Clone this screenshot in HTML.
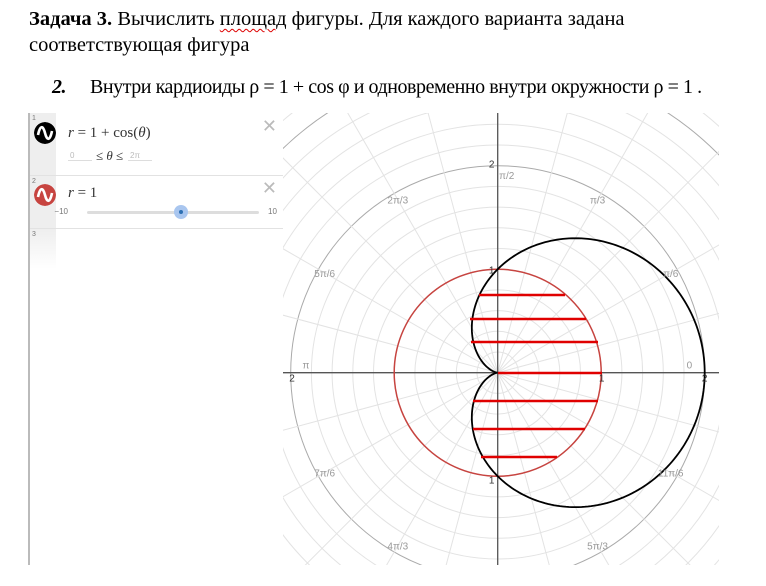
<!DOCTYPE html>
<html><head><meta charset="utf-8"><style>
html,body{margin:0;width:766px;height:586px;overflow:hidden}
body{background:#fff;position:relative;font-family:"Liberation Serif",serif;}
.t{position:absolute;left:29px;font-size:20.5px;color:#000;white-space:nowrap;line-height:24px}
.u{text-decoration:underline wavy #d00;text-decoration-thickness:1px;text-underline-offset:3px}
#panel{position:absolute;left:28px;top:113px;width:255px;height:452px;border-left:2px solid #bbb;background:#fff;font-family:"Liberation Sans",sans-serif;box-sizing:border-box}
.row{position:absolute;left:0;width:253px;border-bottom:1px solid #e2e2e2}
.strip{position:absolute;left:0;top:0;width:26px;height:100%;background:#eee}
.num{position:absolute;left:2px;top:2px;font-size:7px;color:#777}
.ic{position:absolute;left:4px;width:22px;height:22px;border-radius:50%}
.x{position:absolute;right:6px;font-size:18px;color:#bbb;font-family:"DejaVu Sans",sans-serif}
.m{position:absolute;font-family:"Liberation Serif",serif;font-size:15px;color:#333}
</style></head><body>
<div class="t" style="top:7px"><b>Задача 3.</b> Вычислить <span class="u">площад</span> фигуры. Для каждого варианта задана</div>
<div class="t" style="top:33px">соответствующая фигура</div>
<div class="t" style="top:75px;left:52px;font-size:20px;letter-spacing:-0.45px"><b><i>2.</i></b><span style="position:absolute;left:38px">Внутри кардиоиды ρ = 1 + cos φ  и одновременно внутри окружности ρ = 1 .</span></div>

<svg id="g" style="position:absolute;left:283px;top:113px" width="436" height="452"></svg>

<div id="panel">
 <div class="row" style="top:0;height:62px"><div class="strip"></div><div class="num">1</div>
  <svg class="ic" style="top:9px" viewBox="0 0 22 22"><circle cx="11" cy="11" r="11" fill="#000"/><path d="M4 13 C6 3,9 3,11 11 C13 19,16 19,18 9" stroke="#fff" stroke-width="2.6" fill="none"/></svg>
  <div class="x" style="top:3px">✕</div>
  <div class="m" style="left:38px;top:12px"><i>r</i> = 1 + cos(<i>θ</i>)</div>
  <div style="position:absolute;left:38px;top:38px;width:22px;border-bottom:1px solid #ddd;font-size:8px;color:#bbb;padding-left:2px">0</div>
  <div class="m" style="left:66px;top:35px;font-size:13px">≤ <i>θ</i> ≤</div>
  <div style="position:absolute;left:98px;top:38px;width:22px;border-bottom:1px solid #ddd;font-size:8px;color:#bbb;padding-left:2px">2π</div>
 </div>
 <div class="row" style="top:63px;height:52px"><div class="strip"></div><div class="num">2</div>
  <svg class="ic" style="top:8px" viewBox="0 0 22 22"><circle cx="11" cy="11" r="11" fill="#c74440"/><path d="M4 13 C6 3,9 3,11 11 C13 19,16 19,18 9" stroke="#fff" stroke-width="2.6" fill="none"/></svg>
  <div class="x" style="top:2px">✕</div>
  <div class="m" style="left:38px;top:9px"><i>r</i> = 1</div>
  <div style="position:absolute;left:14px;top:31px;font-size:8px;color:#777;width:24px;text-align:right">−10</div>
  <div style="position:absolute;left:57px;top:35px;width:172px;height:3px;background:#ddd;border-radius:2px"></div>
  <div style="position:absolute;left:144px;top:29px;width:14px;height:14px;border-radius:50%;background:#a9c6ef"></div>
  <div style="position:absolute;left:149px;top:34px;width:4px;height:4px;border-radius:50%;background:#2d70b3"></div>
  <div style="position:absolute;left:238px;top:31px;font-size:8px;color:#777">10</div>
 </div>
 <div style="position:absolute;left:0;top:116px;width:26px;height:40px;background:linear-gradient(#eee,#fff)"></div>
 <div class="num" style="top:118px">3</div>
</div>

<script>
var s=document.getElementById('g'),ox=497.7-283,oy=372.7-113,k=103.5,h='';
function L(x1,y1,x2,y2,c,w){h+='<line x1="'+x1+'" y1="'+y1+'" x2="'+x2+'" y2="'+y2+'" stroke="'+c+'" stroke-width="'+w+'"/>';}
for(var i=1;i<=20;i++){var r=i*0.2;var maj=(i%5==0);h+='<circle cx="'+ox+'" cy="'+oy+'" r="'+(r*k)+'" fill="none" stroke="'+(maj?'#aaa':'#e3e3e3')+'" stroke-width="1"/>';}
for(var a=0;a<24;a++){var t=a*Math.PI/12;L(ox,oy,ox+600*Math.cos(t),oy-600*Math.sin(t),'#e3e3e3',1);}
L(0,oy,436,oy,'#555',1.3);L(ox,0,ox,453,'#555',1.3);
h+='<circle cx="'+ox+'" cy="'+oy+'" r="'+k+'" fill="none" stroke="#c74440" stroke-width="1.5"/>';
var p='';for(var j=0;j<=360;j++){var t=j*Math.PI/180,r=(1+Math.cos(t))*k;p+=(j?'L':'M')+(ox+r*Math.cos(t)).toFixed(2)+' '+(oy-r*Math.sin(t)).toFixed(2);}
h+='<path d="'+p+'" fill="none" stroke="#000" stroke-width="1.8"/>';
[[295,479,565],[319,470,586],[342,471,598],[373,498,602],[401,473,598],[429,473,585],[457,481,557]].forEach(function(q){L(q[1]-283,q[0]-113,q[2]-283,q[0]-113,'#e00000',2.6);});
var lb=[['π/2',90],['π/3',60],['π/6',30],['0',0],['2π/3',120],['5π/6',150],['π',180],['7π/6',210],['4π/3',240],['5π/3',300],['11π/6',330]];
lb.forEach(function(q){var t=q[1]*Math.PI/180,r=1.93*k;var x=ox+r*Math.cos(t),y=oy-r*Math.sin(t);if(q[1]==90){x+=9;y+=2;}if(q[1]==0){x-=8;y-=8}if(q[1]==180){x+=8;y-=8}
h+='<text x="'+x+'" y="'+(y+4)+'" font-family="Liberation Sans" font-size="10" fill="#999" text-anchor="middle">'+q[0]+'</text>';});
[['2',ox-6,oy-205],['1',ox-6,oy-99],['1',ox-6,oy+111],['2',9,oy+9],['1',ox+104,oy+9],['2',ox+207,oy+9]].forEach(function(q){h+='<text x="'+q[1]+'" y="'+q[2]+'" font-family="Liberation Sans" font-size="10" fill="#333" text-anchor="middle">'+q[0]+'</text>';});
s.innerHTML=h;
</script>
</body></html>
